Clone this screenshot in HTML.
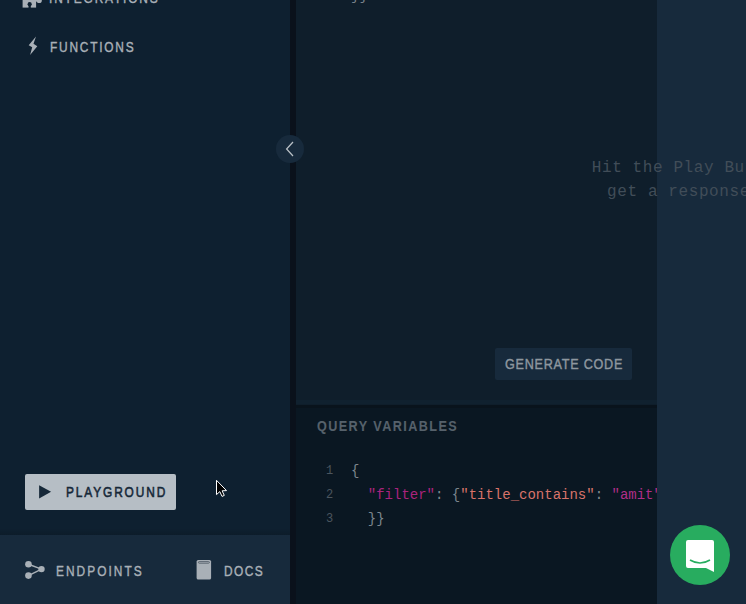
<!DOCTYPE html>
<html><head><meta charset="utf-8">
<style>
html,body{margin:0;padding:0;width:746px;height:604px;overflow:hidden;background:#0f1e2b;}
*{box-sizing:border-box;}
.a{position:absolute;}
body{font-family:"Liberation Sans",sans-serif;}
#side{left:0;top:0;width:290px;height:604px;background:#0e2030;}
#strip{left:290px;top:0;width:6px;height:604px;background:#0a111b;}
#editor{left:296px;top:0;width:361px;height:405px;background:#0f1e2b;}
#vars{left:296px;top:405px;width:361px;height:199px;background:#0a1722;}
#result{left:657px;top:0;width:89px;height:604px;background:#172a3c;}
#bottom{left:0;top:535px;width:290px;height:69px;background:#172a3c;}
.nav{font-weight:normal;font-size:14px;letter-spacing:2.09px;color:#a9b0b7;-webkit-text-stroke:0.4px currentColor;line-height:16px;white-space:nowrap;transform:scaleX(0.85);transform-origin:0 0;}
#pg{left:25px;top:474px;width:151px;height:36px;background:#b6bec5;border-radius:2px;}
#pgtext{color:#162838;-webkit-text-stroke:0.55px currentColor;}
#collapse{left:276px;top:135px;width:28px;height:28px;border-radius:50%;background:#172a3c;}
#gen{left:495px;top:348px;width:137px;height:32px;background:#172a3c;border-radius:2px;}
.mono{font-family:"Liberation Mono",monospace;white-space:pre;}
.code{font-size:14px;line-height:24px;}
#launcher{left:670px;top:525px;width:60px;height:60px;border-radius:50%;background:#28ac5f;}
</style></head><body>
<div class="a" id="side"></div>
<div class="a" id="bottom"></div>
<div class="a" style="left:0;top:528px;width:290px;height:7px;background:linear-gradient(rgba(0,0,0,0),rgba(0,0,0,0.13))"></div>
<div class="a" id="strip"></div>
<div class="a" id="editor"></div>
<div class="a" id="vars"></div>
<div class="a" style="left:296px;top:400px;width:361px;height:4px;background:#10212f"></div>
<div class="a" style="left:296px;top:405px;width:361px;height:3px;background:#09131c"></div>

<!-- sidebar items -->
<svg class="a" style="left:0;top:0" width="50" height="12" viewBox="0 0 50 12">
  <path fill="#a9b0b7" d="M22.6 -6 H36.1 V7.6 H22.6 Z"/>
  <circle cx="39.2" cy="0.4" r="2.6" fill="#a9b0b7"/>
  <rect x="35" y="-1" width="3" height="2.6" fill="#a9b0b7"/>
  <circle cx="29.65" cy="4.2" r="2.1" fill="#0e2030"/>
  <rect x="28.5" y="4" width="2.3" height="5" fill="#0e2030"/>
</svg>
<div class="a nav" style="left:49px;top:-10px;letter-spacing:2.18px">INTEGRATIONS</div>

<svg class="a" style="left:24px;top:34px" width="18" height="24" viewBox="0 0 18 24">
  <path fill="#a9b0b7" d="M12 2.6 L9.5 9.8 L13.3 12.2 L6.1 21 L8.2 13.2 L4.7 11.2 Z"/>
</svg>
<div class="a nav" style="left:50px;top:39px">FUNCTIONS</div>

<div class="a" id="pg"></div>
<svg class="a" style="left:38px;top:485px" width="14" height="14" viewBox="0 0 14 14">
  <path fill="#162838" d="M1.1 0.3 L13.1 6.8 L1.1 13.5 Z"/>
</svg>
<div class="a nav" id="pgtext" style="left:66px;top:484px;letter-spacing:2.2px">PLAYGROUND</div>

<svg class="a" style="left:22px;top:558px" width="26" height="24" viewBox="0 0 26 24">
  <g stroke="#a9b0b7" stroke-width="1.4"><line x1="6.45" y1="6.25" x2="19.5" y2="11.1"/><line x1="6.45" y1="17.6" x2="19.5" y2="11.1"/></g>
  <g fill="#a9b0b7"><circle cx="6.45" cy="6.25" r="3.3"/><circle cx="19.5" cy="11.1" r="3.2"/><circle cx="6.45" cy="17.6" r="3.3"/></g>
</svg>
<div class="a nav" style="left:56px;top:563px;letter-spacing:2.39px">ENDPOINTS</div>

<svg class="a" style="left:192px;top:558px" width="24" height="24" viewBox="0 0 24 24">
  <rect x="4.6" y="2" width="14.5" height="19.5" rx="1.6" fill="#a9b0b7"/>
  <rect x="6.4" y="3.6" width="11" height="1.6" rx="0.8" fill="none" stroke="#55606a" stroke-width="0.9"/>
</svg>
<div class="a nav" style="left:224px;top:563px;letter-spacing:1.69px">DOCS</div>

<div class="a" id="collapse"></div>
<svg class="a" style="left:282px;top:139px" width="16" height="20" viewBox="0 0 16 20">
  <path d="M11 3 L4.6 10 L11 17" fill="none" stroke="#b9c0c6" stroke-width="1.25"/>
</svg>

<svg class="a" style="left:215px;top:479px" width="14" height="20" viewBox="0 0 14 20">
  <path d="M1.5 1.3 V15.6 L4.8 12.6 L7 17.4 L9.3 16.4 L7.1 11.8 L11.5 11.6 Z" fill="#000" stroke="#fff" stroke-width="1" stroke-linejoin="round"/>
</svg>
<!-- editor -->
<div class="a mono code" style="left:351px;top:-16px;color:#7a838b;">}}</div>
<div class="a" id="gen"></div>
<div class="a nav" style="left:505px;top:356px;letter-spacing:0.84px;transform:scaleX(0.9);color:#8e979f;">GENERATE CODE</div>

<div class="a nav" style="left:317px;top:418px;font-size:14px;font-weight:bold;-webkit-text-stroke:0.1px currentColor;letter-spacing:1.6px;transform:scaleX(0.9);color:#56616b;">QUERY VARIABLES</div>
<div class="a mono code" style="left:326px;top:459px;color:#4b555e;font-size:12px;">1
2
3</div>
<div class="a mono code" style="left:351px;top:459px;color:#7d868e;">{
  <span style="color:#aa237d">"filter"</span>: {<span style="color:#d8736a">"title_contains"</span>: <span style="color:#b02e88">"amit"</span>
  }}</div>

<!-- result -->
<div class="a" id="result"></div>
<div class="a mono" style="left:504px;top:156px;width:400px;text-align:center;font-size:16px;line-height:24px;letter-spacing:0.6px;color:#414d58;">Hit the Play Button to
get a response here</div>

<div class="a" id="launcher"></div>
<svg class="a" style="left:684px;top:538px" width="32" height="36" viewBox="0 0 32 36">
  <path fill="#fff" d="M4 2 H28 A2 2 0 0 1 30 4 V34 L22 30 H4 A2 2 0 0 1 2 28 V4 A2 2 0 0 1 4 2 Z"/>
  <path d="M6 22 Q16 28 26 22" fill="none" stroke="#28ac5f" stroke-width="1.6"/>
</svg>
</body></html>
